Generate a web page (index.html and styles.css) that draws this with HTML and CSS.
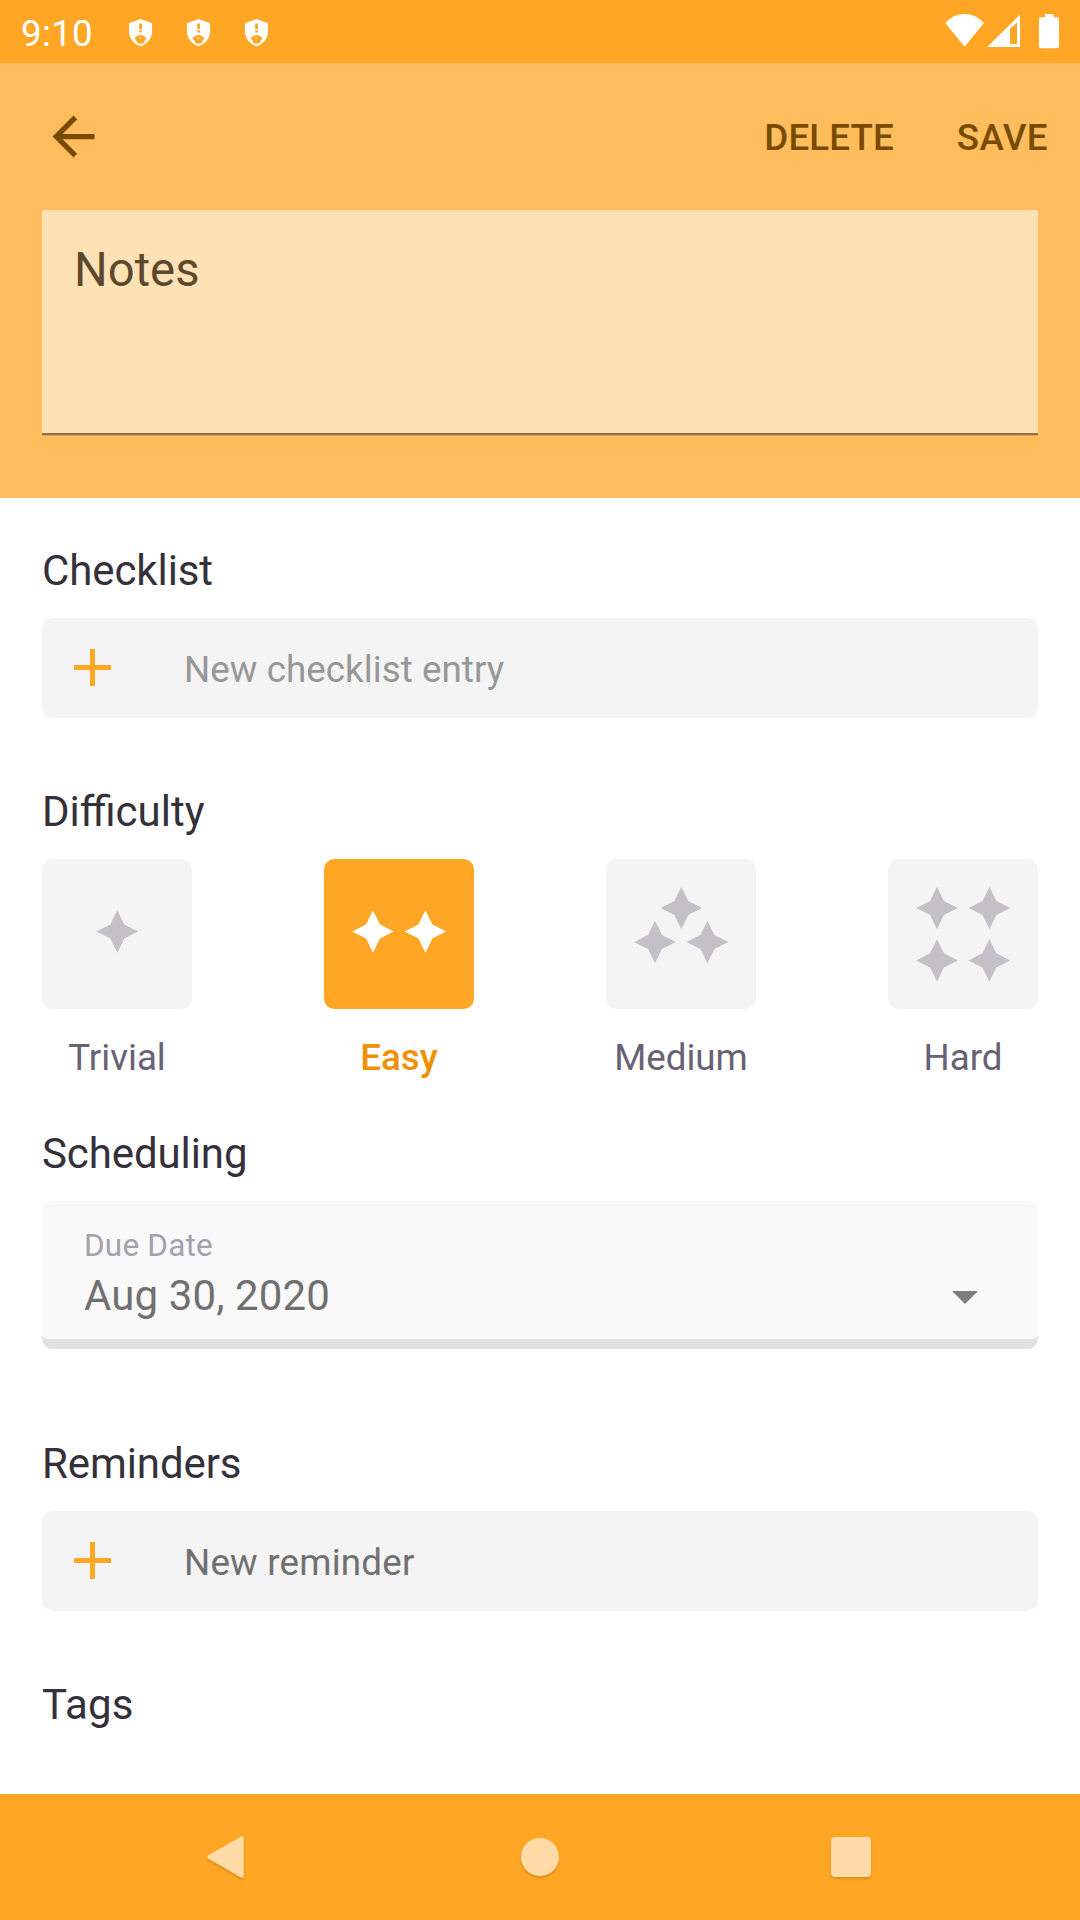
FILE: index.html
```html
<!DOCTYPE html>
<html lang="en">
<head>
<meta charset="utf-8">
<title>Edit task</title>
<link rel="stylesheet" href="styles.css">
</head>
<body>
<svg width="0" height="0" class="defs">
  <defs>
    <path id="star" d="M0-21.2L7-7.1 20.8 0 7 7.1 0 21.2-7 7.1-20.8 0-7-7.1Z"/>
    <g id="shield">
      <path fill="#fff" d="M11.5 0L23 4.3V12.500C23 19 18.500 25 11.500 27.200 4.500 25 0 19 0 12.500V4.300Z"/>
      <path fill="#ffa624" d="M10.200 4.500h2.800v5.500h-2.800zM10.200 11.300h2.800v2.200h-2.800zM5.500 19.500Q8 16 11.500 16T17.500 19.500L15.500 21.500V23L13.500 24.500H9.500L7.500 23V21.500Z"/>
      <path fill="#fff" d="M10 18.500h2.500v1.200H10z" opacity=".6"/>
    </g>
  </defs>
</svg>
<div class="screen">
  <div class="status">
    <span class="clock">9:10</span>
    <svg class="shield" viewBox="0 0 23 28"><use href="#shield"/></svg>
    <svg class="shield" viewBox="0 0 23 28"><use href="#shield"/></svg>
    <svg class="shield" viewBox="0 0 23 28"><use href="#shield"/></svg>
    <svg class="indicators" viewBox="0 0 116 36" fill="#fff">
      <path d="M1.300 10Q9.500 1 20.500 1T40 10L20.500 33.700Z"/>
      <path fill-rule="evenodd" d="M43.200 34L76 1.500V34ZM66 15.500V31H73V9.500Z"/>
      <path d="M101 1h8.500v3.200h3.500q2 0 2 2v27q0 2-2 2h-16q-2 0-2-2V6.200q0-2 2-2h4z"/>
    </svg>
  </div>
  <header class="header">
    <div class="toolbar">
      <svg class="back" viewBox="0 0 24 24"><path fill="#794b00" d="M20 11H7.830l5.590-5.590L12 4l-8 8 8 8 1.410-1.410L7.830 13H20z"/></svg>
      <span class="action">DELETE</span>
      <span class="action">SAVE</span>
    </div>
    <div class="notes">Notes</div>
  </header>
  <main class="content">
    <section class="section checklist">
      <h2>Checklist</h2>
      <div class="row hint">
        <svg class="plus" viewBox="0 0 37 37"><path d="M16 0h5v16h16v5H21v16h-5V21H0v-5h16z"/></svg>
        <span>New checklist entry</span>
      </div>
    </section>
    <section class="section difficulty">
      <h2>Difficulty</h2>
      <div class="levels">
        <div class="level">
          <svg class="tile" viewBox="0 0 150 150"><use href="#star" x="75.300" y="72.500"/></svg>
          <span>Trivial</span>
        </div>
        <div class="level selected">
          <svg class="tile" viewBox="0 0 150 150"><use href="#star" x="49" y="72.500"/><use href="#star" x="101.400" y="72.500"/></svg>
          <span>Easy</span>
        </div>
        <div class="level">
          <svg class="tile" viewBox="0 0 150 150"><use href="#star" x="75.300" y="49"/><use href="#star" x="49" y="83"/><use href="#star" x="101.400" y="83"/></svg>
          <span>Medium</span>
        </div>
        <div class="level">
          <svg class="tile" viewBox="0 0 150 150"><use href="#star" x="49" y="49"/><use href="#star" x="101.400" y="49"/><use href="#star" x="49" y="101.400"/><use href="#star" x="101.400" y="101.400"/></svg>
          <span>Hard</span>
        </div>
      </div>
    </section>
    <section class="section scheduling">
      <h2>Scheduling</h2>
      <div class="due">
        <div class="due-body">
          <div class="due-text">
            <span class="due-label">Due Date</span>
            <span class="due-date">Aug 30, 2020</span>
          </div>
          <svg class="caret" viewBox="0 0 26 13"><path fill="#7d7d7d" d="M0 0h26L13 13z"/></svg>
        </div>
      </div>
    </section>
    <section class="section reminders">
      <h2>Reminders</h2>
      <div class="row reminder">
        <svg class="plus" viewBox="0 0 37 37"><path d="M16 0h5v16h16v5H21v16h-5V21H0v-5h16z"/></svg>
        <span>New reminder</span>
      </div>
    </section>
    <section class="section tags">
      <h2>Tags</h2>
    </section>
  </main>
  <nav class="nav">
    <svg class="nav-icon" viewBox="0 0 48 48"><path d="M5.500 22.300L38 3.400Q40.700 2.300 40.700 5V43Q40.700 45.700 38 44.600L5.500 25.700Q3 24 5.500 22.300Z"/></svg>
    <svg class="nav-icon" viewBox="0 0 48 48"><circle cx="25" cy="24" r="19"/></svg>
    <svg class="nav-icon" viewBox="0 0 48 48"><rect x="4" y="4" width="40" height="40" rx="4"/></svg>
  </nav>
</div>
</body>
</html>
```
FILE: styles.css
```css
* { box-sizing: border-box; }
body {
  margin: 0;
  background: #fff;
  font-family: Roboto, "Liberation Sans", sans-serif;
}
.defs { position: absolute; }
svg { display: block; flex: none; }
.screen {
  width: 1080px;
  height: 1920px;
  display: flex;
  flex-direction: column;
  overflow: hidden;
}

/* Status bar */
.status {
  height: 63px;
  flex: none;
  display: flex;
  padding: 0 20px;
  background: #ffa624;
  color: #fff;
}
.clock {
  width: 73.500px;
  margin-right: 35px;
  padding-left: 1px;
  font-size: 36.750px;
  line-height: 68px;
  letter-spacing: .3px;
}
.shield { width: 23px; height: 28px; margin: 18.500px 35px 0 0; }
.indicators { width: 116px; height: 36px; margin: 13px 0 0 auto; }

/* Header */
.header {
  height: 435px;
  flex: none;
  padding: 0 42px;
  background: #ffbd5d;
}
.toolbar {
  height: 147px;
  display: flex;
  align-items: center;
  gap: 63px;
  margin-right: -10px;
}
.back { width: 63px; height: 63px; margin-right: auto; }
.action {
  padding-top: 2px;
  font-size: 36.750px;
  font-weight: 500;
  line-height: 50px;
  letter-spacing: .1px;
  color: #794b00;
}
.action:last-child { letter-spacing: .4px; }
.notes {
  height: 225px;
  padding: 32px 32px 0;
  font-size: 47.250px;
  line-height: 57px;
  color: #5b482d;
  background: #ffe1b6;
  border-bottom: 2px solid #957240;
  box-shadow: 0 1px 0 #d9a456;
}

/* Form */
.content { flex: 1; padding: 48px 42px 0; overflow: hidden; }
.section { display: flex; flex-direction: column; gap: 22px; }
.checklist { margin-bottom: 69px; }
.difficulty { height: 342px; }
.scheduling { margin-bottom: 90px; }
.reminders { margin-bottom: 69px; }
h2 {
  margin: 0;
  font-size: 42px;
  font-weight: 400;
  line-height: 50px;
  letter-spacing: -.1px;
  color: #34313a;
}
.difficulty h2 { letter-spacing: normal; }
.tags h2 { letter-spacing: .2px; }
.row {
  height: 100px;
  display: flex;
  align-items: center;
  gap: 73px;
  padding: 0 32px;
  border-radius: 10.500px;
  background: #f4f4f4;
  font-size: 36.750px;
  line-height: 44px;
  color: #707070;
}
.hint { color: #979797; letter-spacing: .05px; }
.reminder { letter-spacing: .2px; }
.row span { padding-top: 3px; }
.plus { width: 37px; height: 37px; margin-bottom: 1px; fill: #ffa624; }

.levels { display: flex; justify-content: space-between; }
.level {
  width: 150px;
  display: flex;
  flex-direction: column;
  align-items: center;
  gap: 27px;
  font-size: 36.750px;
  line-height: 44px;
  color: #686274;
}
.tile {
  width: 150px;
  height: 150px;
  border-radius: 10.500px;
  background: #f4f4f4;
  fill: #c3c0c7;
}
.selected { color: #ee9109; font-weight: 500; }
.selected .tile { background: #ffa624; fill: #fff; }

.due {
  height: 148px;
  padding-bottom: 10px;
  border-radius: 10.500px;
  background: #e1e1e3;
  overflow: hidden;
}
.due-body {
  height: 138px;
  display: flex;
  justify-content: space-between;
  padding: 0 60.500px 0 42px;
  border-radius: 0 0 5px 5px;
  background: #f9f9f9;
}
.due-text { display: flex; flex-direction: column; padding-top: 26px; }
.due-label { font-size: 31.500px; line-height: 38px; letter-spacing: .2px; color: #a5a1ac; }
.due-date { font-size: 42px; line-height: 50px; margin-top: 6px; letter-spacing: .1px; color: #707070; }
.caret { width: 26px; height: 13px; margin-top: 90px; }

/* Navigation bar */
.nav {
  height: 126px;
  flex: none;
  display: flex;
  align-items: center;
  justify-content: space-between;
  padding: 0 205px 0 203px;
  background: #ffa624;
}
.nav-icon { width: 48px; height: 48px; fill: #ffdba8; filter: drop-shadow(0 2px 1px rgba(120, 70, 0, .25)); }
```
